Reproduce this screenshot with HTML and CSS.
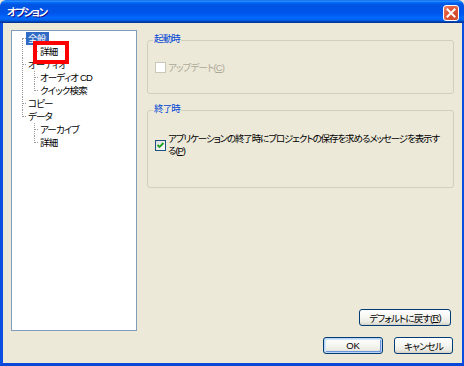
FILE: index.html
```html
<!DOCTYPE html>
<html lang="ja">
<head>
<meta charset="utf-8">
<title>オプション</title>
<link rel="stylesheet" href="styles.css">
</head>
<body>
<div class="window">
  <div class="titlebar">
    <span class="title">オプション</span>
    <span class="close">
      <svg width="14" height="14" viewBox="0 0 14 14"><path d="M3.5 3.5 L10.5 10.5 M10.5 3.5 L3.5 10.5" stroke="#fff" stroke-width="2" stroke-linecap="square"/></svg>
    </span>
  </div>
  <div class="frame">
    <div class="client">
      <div class="main">
        <div class="tree">
          <ul>
            <li><span class="item sel">全般</span>
              <ul><li><span class="item">詳細</span></li></ul>
            </li>
            <li><span class="item">オーディオ</span>
              <ul>
                <li><span class="item">オーディオ CD</span></li>
                <li><span class="item">クイック検索</span></li>
              </ul>
            </li>
            <li><span class="item">コピー</span></li>
            <li><span class="item">データ</span>
              <ul>
                <li><span class="item">アーカイブ</span></li>
                <li><span class="item">詳細</span></li>
              </ul>
            </li>
          </ul>
        </div>
        <div class="pane">
          <fieldset class="group g1">
            <legend>起動時</legend>
            <div class="row">
              <span class="cb disabled"></span>
              <span class="lbl disabled">アップデート(<u>C</u>)</span>
            </div>
          </fieldset>
          <fieldset class="group g2">
            <legend>終了時</legend>
            <div class="row">
              <span class="cb checked"><svg width="9" height="9" viewBox="0 0 9 9"><path d="M1.5 4 L3.5 6 L7.5 2" fill="none" stroke="#21a121" stroke-width="1.8"/></svg></span>
              <span class="lbl multi">アプリケーションの終了時にプロジェクトの保存を求めるメッセージを表示す<br>る(<u>P</u>)</span>
            </div>
          </fieldset>
          <button class="btn reset">デフォルトに戻す(<u>R</u>)</button>
        </div>
      </div>
      <div class="actions">
        <button class="btn ok">OK</button>
        <button class="btn cancel">キャンセル</button>
      </div>
    </div>
  </div>
  <div class="annot"></div>
</div>
</body>
</html>
```
FILE: styles.css
```css
* { box-sizing: border-box; }
html, body { margin: 0; padding: 0; }
body {
  width: 464px;
  height: 366px;
  overflow: hidden;
  background: #ece9d8;
  font-family: "Liberation Sans", "Noto Sans CJK JP", sans-serif;
  font-size: 9.5px;
  font-feature-settings: "palt";
  letter-spacing: -0.85px;
  color: #000;
}
.window {
  position: relative;
  width: 464px;
  height: 366px;
  display: flex;
  flex-direction: column;
}
.titlebar {
  height: 23px;
  flex: none;
  display: flex;
  align-items: center;
  justify-content: space-between;
  padding: 0 5px 0 7px;
  background: linear-gradient(to bottom, #0058ee 0%, #3593ff 4%, #288eff 6%, #127dff 8%, #036ffc 10%, #0262ee 14%, #0057e5 20%, #0054e3 24%, #0055eb 56%, #005bf5 66%, #026afe 76%, #0062ef 86%, #0052d6 92%, #0040ab 94%, #003092 100%);
  border-radius: 6px 6px 0 0;
}
.title {
  color: #fff;
  font-weight: bold;
  font-size: 10.5px;
  letter-spacing: -1.6px;
  text-shadow: 1px 1px #0f1089;
  font-family: "Noto Sans CJK JP", sans-serif;
}
.close {
  width: 16px;
  height: 16px;
  margin-top: 2px;
  border: 1px solid #fff;
  border-radius: 3px;
  background: radial-gradient(circle at 70% 70%, #cc4625 0%, #e0573a 55%, #f08a70 100%);
  display: flex;
  align-items: center;
  justify-content: center;
}
.frame {
  flex: 1;
  display: flex;
  border-left: 3px solid #0b4fe2;
  border-right: 2px solid #0b4fe2;
  border-bottom: 3px solid #0a46d8;
}
.client {
  flex: 1;
  display: flex;
  flex-direction: column;
  background: #ece9d8;
  padding: 7px 8px 9px 8px;
}
.main {
  display: flex;
  gap: 10px;
  height: 301px;
}
.tree {
  width: 126px;
  flex: none;
  background: #fff;
  border: 1px solid #7f9db9;
  padding-top: 1px;
}
.tree ul { list-style: none; margin: 0; padding: 0; }
.tree > ul { padding-left: 10px; }
.tree li { position: relative; padding-left: 4px; }
.tree li::before {
  content: "";
  position: absolute;
  left: 0;
  top: 6px;
  width: 4px;
  border-top: 1px dotted #9c9c9c;
}
.tree li::after {
  content: "";
  position: absolute;
  left: 0;
  top: 0;
  bottom: 0;
  border-left: 1px dotted #9c9c9c;
}
.tree li:last-child::after { bottom: auto; height: 7px; }
.tree > ul > li:first-child::after { top: 6px; }
.tree li ul { padding-left: 8px; }
.item {
  display: inline-block;
  height: 13px;
  line-height: 13px;
  padding: 0 2px;
  white-space: nowrap;
}
.item.sel { background: #316ac5; color: #fff; padding-right: 4px; }
.pane {
  width: 307px;
  flex: none;
  min-width: 0;
  display: flex;
  flex-direction: column;
}
.group {
  margin: 0;
  border: 1px solid #d0d0bf;
  border-radius: 3px;
  padding: 0 6px;
  min-width: 0;
}
.group legend {
  color: #0046d5;
  line-height: 12px;
  padding: 0 1px 2px;
  margin-left: -1px;
}
.g1 { margin-top: 3px; padding-top: 14px; padding-bottom: 19px; }
.g2 { margin-top: 9px; padding-top: 16px; padding-bottom: 30px; }
.row {
  display: flex;
  align-items: center;
  gap: 2px;
  padding-left: 1px;
}
.g1 .row { height: 13px; }
.cb {
  width: 11px;
  height: 11px;
  flex: none;
  border: 1px solid #1c5180;
  background: linear-gradient(135deg, #dcdcd7, #fff);
  display: flex;
  align-items: center;
  justify-content: center;
}
.cb.disabled { border-color: #cac8bb; background: #fff; }
.lbl { white-space: nowrap; line-height: 12px; }
.lbl.multi { letter-spacing: -1.1px; }
.lbl.disabled { color: #aca899; }
.btn {
  font: inherit;
  font-feature-settings: "palt";
  letter-spacing: -0.85px;
  height: 17px;
  padding: 0;
  border: 1px solid #003c74;
  border-radius: 3px;
  background: linear-gradient(#ffffff 0%, #f6f6f2 45%, #ebebe3 80%, #d6d0c5 100%);
  color: #000;
  display: flex;
  align-items: center;
  justify-content: center;
}
.reset {
  margin-top: auto;
  align-self: flex-end;
  width: 92px;
  margin-right: 3px;
  margin-bottom: 5px;
}
.actions {
  display: flex;
  justify-content: flex-end;
  gap: 11px;
  margin-top: 6px;
  margin-right: 1px;
}
.ok {
  width: 60px;
  letter-spacing: 0;
  box-shadow: inset 0 0 0 1px #bcd4f6, inset 1px 1px 0 1px #cee7ff, inset -1px -1px 0 1px #6b94dd;
}
.cancel { width: 59px; }
.annot {
  position: absolute;
  left: 33px;
  top: 41px;
  width: 36px;
  height: 23px;
  border: 4px solid #f00;
}
```
